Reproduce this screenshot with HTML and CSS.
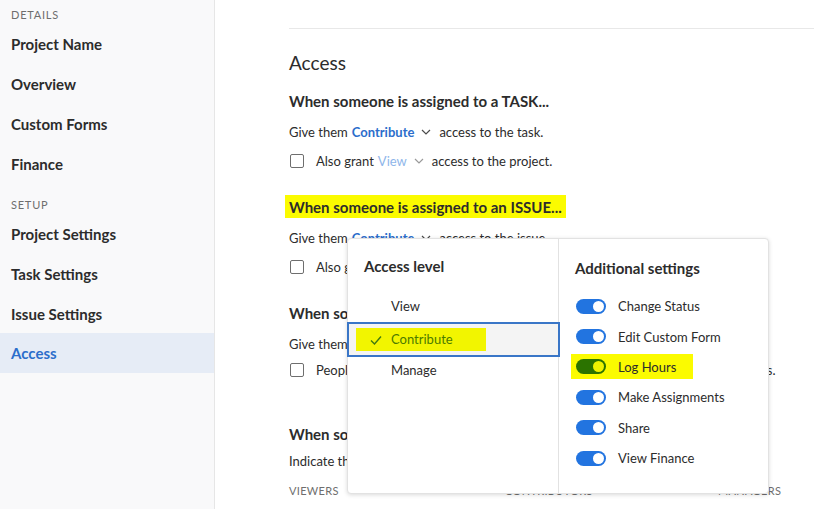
FILE: index.html
```html
<!DOCTYPE html>
<html>
<head>
<meta charset="utf-8">
<link rel="stylesheet" href="styles.css">
</head>
<body>
<div class="page">
  <nav class="sidebar">
    <div class="nav-label">DETAILS</div>
    <div class="nav-item">Project Name</div>
    <div class="nav-item">Overview</div>
    <div class="nav-item">Custom Forms</div>
    <div class="nav-item">Finance</div>
    <div class="nav-label nav-label-gap">SETUP</div>
    <div class="nav-item">Project Settings</div>
    <div class="nav-item">Task Settings</div>
    <div class="nav-item">Issue Settings</div>
    <div class="nav-item active">Access</div>
  </nav>
  <main class="main">
    <div class="rule"></div>
    <h1 class="title">Access</h1>

    <section class="block block-first">
      <h2 class="block-head">When someone is assigned to a TASK...</h2>
      <div class="line">Give them <span class="link">Contribute</span><svg class="chev" viewBox="0 0 10 6"><path d="M1 1 L5 5 L9 1" /></svg> access to the task.</div>
      <div class="line check-line"><span class="box"></span>Also grant <span class="link light">View</span><svg class="chev light" viewBox="0 0 10 6"><path d="M1 1 L5 5 L9 1" /></svg> access to the project.</div>
    </section>

    <section class="block">
      <h2 class="block-head"><span class="hl-head">When someone is assigned to an ISSUE...</span></h2>
      <div class="line">Give them <span class="link">Contribute</span><svg class="chev" viewBox="0 0 10 6"><path d="M1 1 L5 5 L9 1" /></svg> access to the issue.</div>
      <div class="line check-line"><span class="box"></span>Also grant <span class="link light">View</span><svg class="chev light" viewBox="0 0 10 6"><path d="M1 1 L5 5 L9 1" /></svg> access to the project.</div>
    </section>

    <section class="block">
      <h2 class="block-head">When someone is on the project team...</h2>
      <div class="line line-wide">Give them <span class="link">View</span><svg class="chev" viewBox="0 0 10 6"><path d="M1 1 L5 5 L9 1" /></svg> access to the project.</div>
      <div class="line check-line tight"><span class="box"></span>People on the project team inherit the same permission to its project documents.</div>
    </section>

    <section class="block block-far">
      <h2 class="block-head">When someone shares this project...</h2>
      <div class="line line-close">Indicate the access level they can grant to others.</div>
      <div class="cols">
        <span>VIEWERS</span>
        <span>CONTRIBUTORS</span>
        <span>MANAGERS</span>
      </div>
    </section>
  </main>

  <div class="popover">
    <div class="pop-left">
      <div class="pop-title">Access level</div>
      <div class="menu">
        <div class="menu-item">View</div>
        <div class="menu-item selected">
          <span class="hl-item">
            <svg class="tick" viewBox="0 0 12 10"><path d="M1 5.5 L4.5 9 L11 1.5" /></svg>
            <span class="sel-text">Contribute</span>
          </span>
        </div>
        <div class="menu-item">Manage</div>
      </div>
    </div>
    <div class="pop-right">
      <div class="pop-title">Additional settings</div>
      <div class="toggles">
        <div class="toggle-row"><span class="toggle"></span>Change Status</div>
        <div class="toggle-row"><span class="toggle"></span>Edit Custom Form</div>
        <div class="toggle-row"><span class="hl-toggle"><span class="toggle green"></span>Log Hours</span></div>
        <div class="toggle-row"><span class="toggle"></span>Make Assignments</div>
        <div class="toggle-row"><span class="toggle"></span>Share</div>
        <div class="toggle-row"><span class="toggle"></span>View Finance</div>
      </div>
    </div>
  </div>
</div>
</body>
</html>
```

FILE: styles.css
```css
* { box-sizing: border-box; }
html, body { margin: 0; padding: 0; background: #ffffff; }
body {
  font-family: Lato, "Noto Sans", sans-serif;
  color: #2c2c2c;
  font-size: 13px;
}
.page {
  position: relative;
  display: flex;
  width: 814px;
  height: 509px;
  overflow: hidden;
}
.sidebar {
  width: 215px;
  flex: none;
  background: #f9f9fa;
  border-right: 1px solid #e6e6e6;
  padding-top: 5px;
}
.nav-label {
  height: 19px;
  line-height: 20px;
  padding-left: 11px;
  font-size: 11px;
  letter-spacing: 0.07em;
  color: #6e6e6e;
}
.nav-label-gap { margin-top: 11px; }
.nav-item {
  height: 40px;
  line-height: 40px;
  padding-left: 11px;
  font-size: 15px;
  font-weight: 700;
  color: #2c2c2c;
}
.nav-item.active {
  background: #e6ecf6;
  color: #2c6ecb;
  margin-top: -1px;
}
.main {
  flex: 1;
  padding-left: 74px;
}
.rule {
  margin-top: 28px;
  border-top: 1px solid #e8e8e8;
}
.title {
  margin: 22px 0 0;
  font-size: 19px;
  line-height: 24px;
  font-weight: 400;
}
.block { margin-top: 26px; }
.block-first { margin-top: 16px; }
.block-far { margin-top: 44px; }
.block-head {
  margin: 0;
  font-size: 15px;
  line-height: 20px;
  font-weight: 700;
}
.hl-head {
  background: #fbfb00;
  padding: 3px 4px 2px;
  margin-left: -4px;
}
.line {
  margin-top: 11px;
  line-height: 20px;
  display: flex;
  align-items: center;
  white-space: nowrap;
  font-size: 13px;
}
.line-wide { margin-top: 11px; }
.line-close { margin-top: 7px; }
.check-line { margin-top: 9px; }
.check-line.tight { margin-top: 6px; }
.link {
  color: #2c6ecb;
  font-weight: 700;
  margin-left: 4px;
}
.link.light { color: #8fb6ea; font-weight: 400; }
.chev {
  width: 10px;
  height: 6px;
  margin: 0 8px 0 7px;
  fill: none;
  stroke: #4b4b4b;
  stroke-width: 1.2;
}
.chev.light { stroke: #9a9a9a; }
.box {
  width: 14px;
  height: 14px;
  border: 1.5px solid #6e6e6e;
  border-radius: 2px;
  margin: 0 12px 0 1px;
  background: #fff;
  flex: none;
}
.cols {
  margin-top: 12px;
  display: grid;
  grid-template-columns: 216px 213px auto;
  font-size: 11px;
  line-height: 16px;
  letter-spacing: 0.03em;
  color: #6e6e6e;
}

/* popover */
.popover {
  position: absolute;
  left: 347px;
  top: 238px;
  width: 422px;
  height: 256px;
  display: flex;
  background: #fff;
  border: 1px solid #e2e2e2;
  border-radius: 4px;
  box-shadow: 0 1px 4px rgba(0,0,0,0.15);
}
.pop-left {
  width: 211px;
  flex: none;
  border-right: 1px solid #e2e2e2;
  padding-top: 17px;
}
.pop-right {
  flex: 1;
  padding: 19px 0 0 16px;
}
.pop-title {
  font-size: 15px;
  line-height: 20px;
  font-weight: 700;
  padding-left: 16px;
}
.pop-right .pop-title { padding-left: 0; }
.menu { margin-top: 14px; }
.menu-item {
  height: 32px;
  line-height: 32px;
  padding-left: 43px;
  font-size: 13px;
}
.menu-item.selected {
  margin: 0 -2px 0 -1px;
  padding-left: 7px;
  background: #f4f4f4;
  border: 2px solid #3a76c7;
  height: 35px;
  line-height: 31px;
  display: flex;
  align-items: center;
}
.menu-item.selected + .menu-item { margin-top: -3px; }
.hl-item {
  display: flex;
  align-items: center;
  background: #f2f500;
  height: 23px;
  width: 130px;
  padding-left: 14px;
}
.tick {
  width: 12px;
  height: 10px;
  fill: none;
  stroke: #3f7a10;
  stroke-width: 1.4;
  margin-right: 9px;
}
.sel-text { color: #4b7b00; }
.toggles { margin-top: 13px; }
.toggle-row {
  height: 30.4px;
  display: flex;
  align-items: center;
  font-size: 13px;
  white-space: nowrap;
}
.toggle {
  position: relative;
  width: 30px;
  height: 15px;
  border-radius: 8px;
  background: #2274e0;
  margin: 0 12px 0 1px;
  flex: none;
}
.toggle::after {
  content: "";
  position: absolute;
  right: 2px;
  top: 2px;
  width: 11px;
  height: 11px;
  border-radius: 50%;
  background: #ffffff;
}
.toggle.green { background: #2b7300; }
.toggle.green::after { background: #eef200; }
.hl-toggle {
  display: flex;
  align-items: center;
  background: #fbfb00;
  height: 25px;
  width: 122px;
  margin-left: -4px;
  padding-left: 4px;
}
```
